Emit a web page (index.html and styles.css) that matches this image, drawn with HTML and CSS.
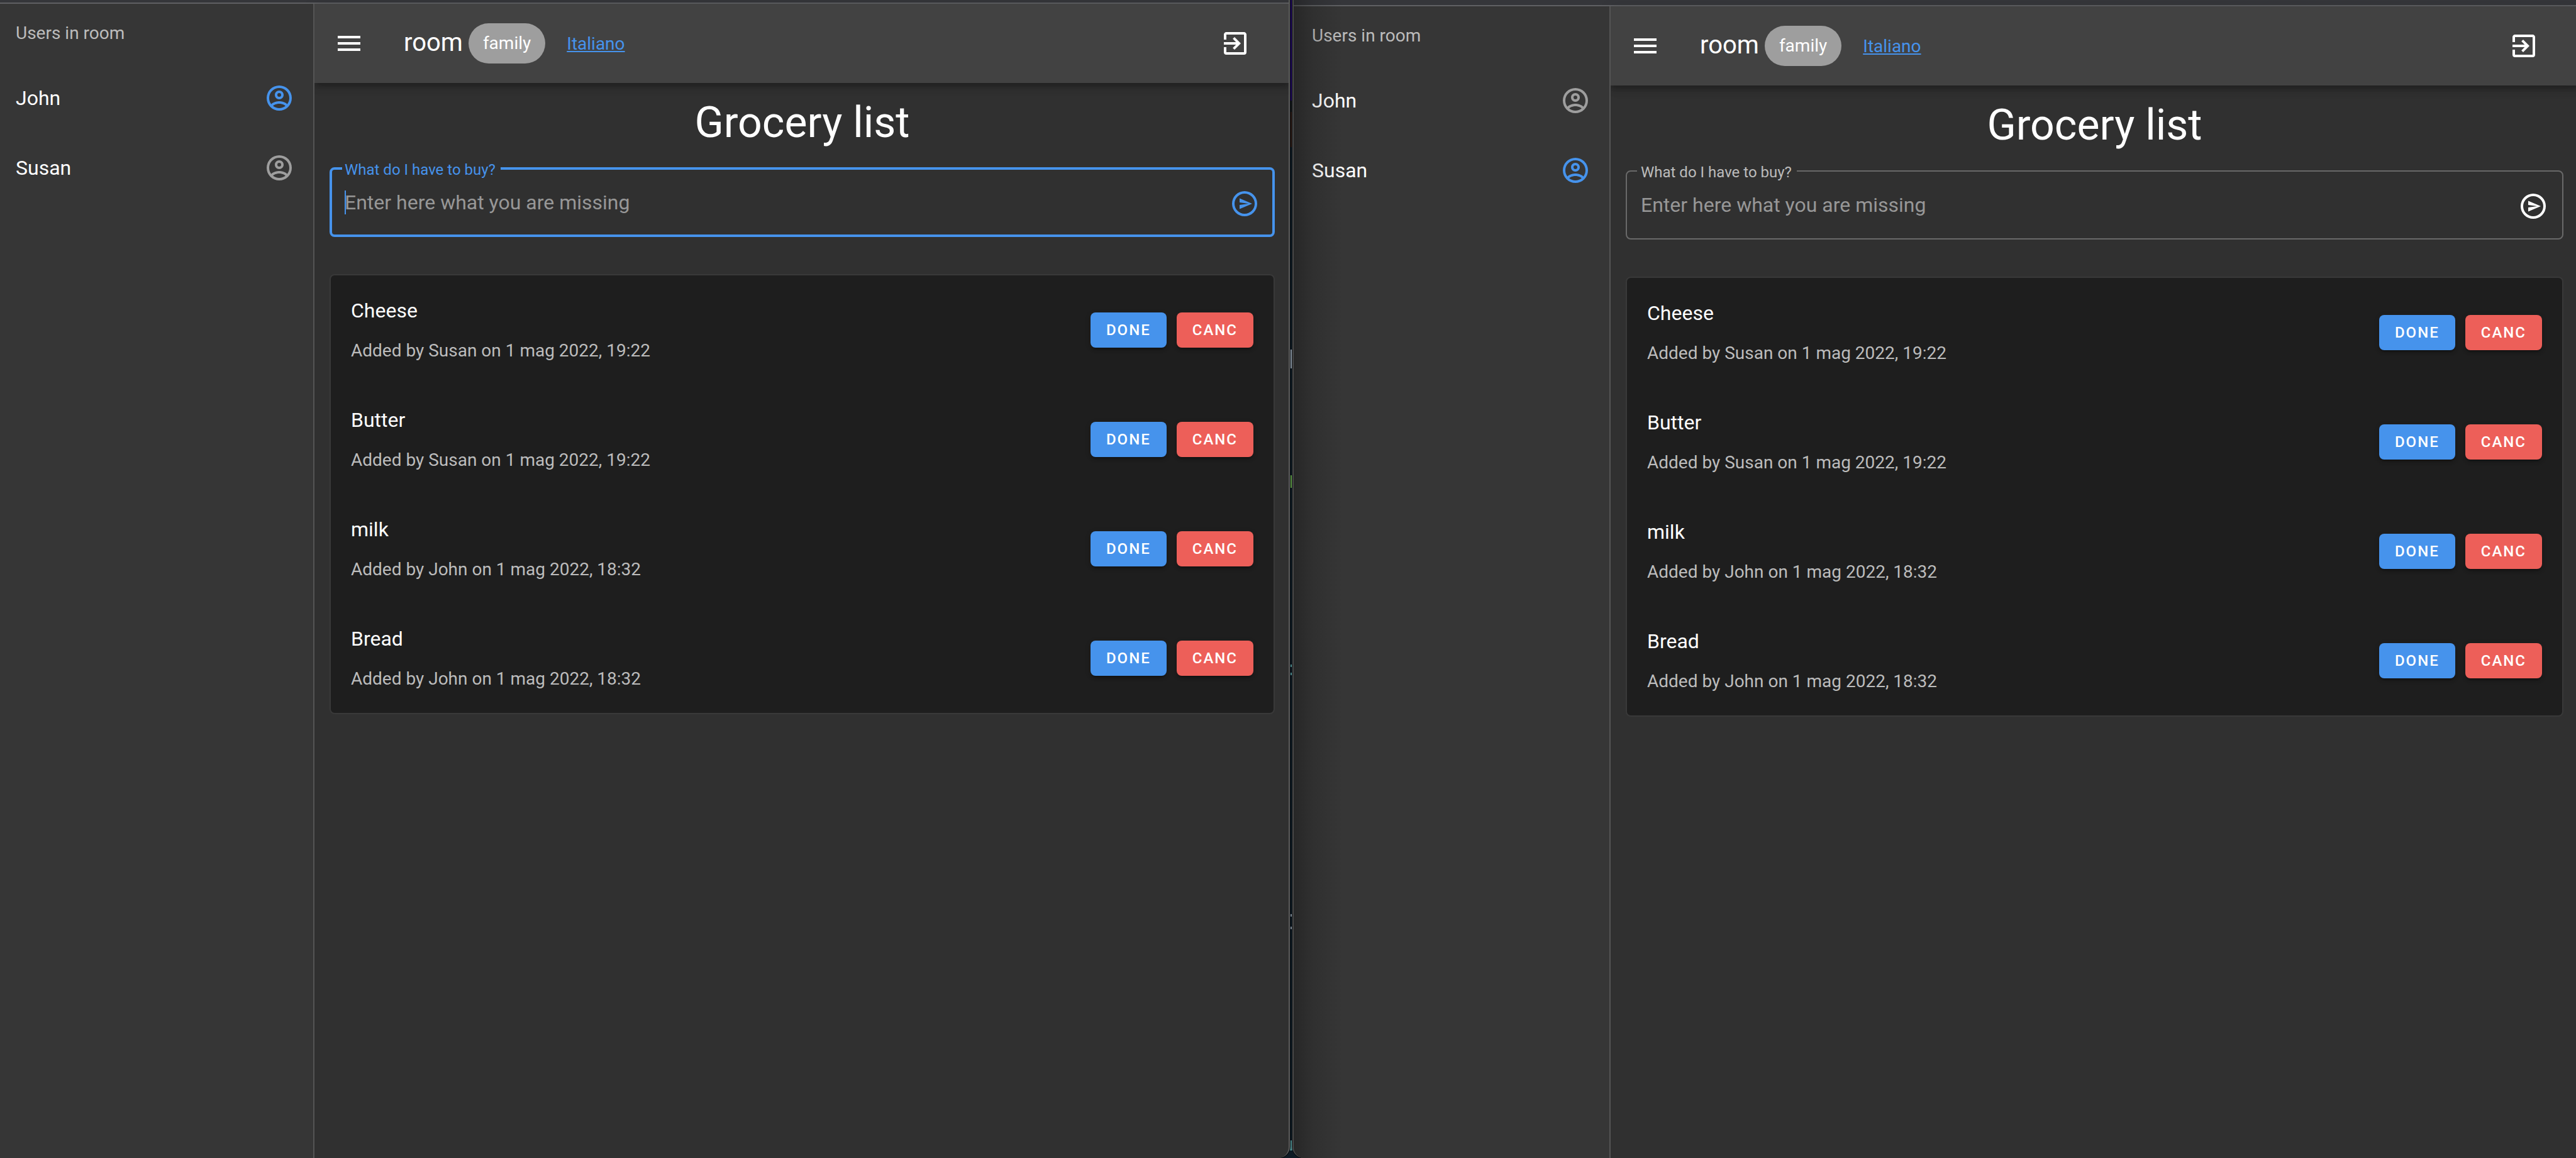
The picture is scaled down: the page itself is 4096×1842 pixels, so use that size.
FILE: index.html
```html
<!DOCTYPE html>
<html lang="en">
<head>
<meta charset="utf-8">
<title>Grocery list</title>
<link rel="stylesheet" href="styles.css">
</head>
<body>
<svg class="sprite" aria-hidden="true">
  <symbol id="account" viewBox="0 0 24 24"><path d="M12,2A10,10 0 0,0 2,12A10,10 0 0,0 12,22A10,10 0 0,0 22,12A10,10 0 0,0 12,2M7.07,18.28C7.5,17.38 10.12,16.5 12,16.5C13.88,16.5 16.5,17.38 16.93,18.28C15.57,19.36 13.86,20 12,20C10.14,20 8.43,19.36 7.07,18.28M18.36,16.83C16.93,15.09 13.46,14.5 12,14.5C10.54,14.5 7.07,15.09 5.64,16.83C4.62,15.5 4,13.82 4,12C4,7.59 7.59,4 12,4C16.41,4 20,7.59 20,12C20,13.82 19.38,15.5 18.36,16.83M12,6C10.06,6 8.5,7.56 8.5,9.5C8.5,11.44 10.06,13 12,13C13.94,13 15.5,11.44 15.5,9.5C15.5,7.56 13.94,6 12,6M12,11A1.5,1.5 0 0,1 10.5,9.5A1.5,1.5 0 0,1 12,8A1.5,1.5 0 0,1 13.5,9.5A1.5,1.5 0 0,1 12,11Z"/></symbol>
  <symbol id="menu" viewBox="0 0 24 24"><path d="M3,6H21V8H3V6M3,11H21V13H3V11M3,16H21V18H3V16Z"/></symbol>
  <symbol id="exit" viewBox="0 0 24 24"><path d="M19,3H5C3.89,3 3,3.89 3,5V9H5V5H19V19H5V15H3V19A2,2 0 0,0 5,21H19A2,2 0 0,0 21,19V5C21,3.89 20.1,3 19,3M10.08,15.58L11.5,17L16.5,12L11.5,7L10.08,8.41L12.67,11H3V13H12.67L10.08,15.58Z"/></symbol>
  <symbol id="send" viewBox="0 0 24 24"><path d="M12,2A10,10 0 0,1 22,12A10,10 0 0,1 12,22A10,10 0 0,1 2,12A10,10 0 0,1 12,2M12,4A8,8 0 0,0 4,12A8,8 0 0,0 12,20A8,8 0 0,0 20,12A8,8 0 0,0 12,4M8,7.71V11.05L15.14,12L8,12.95V16.29L18,12L8,7.71Z"/></symbol>
</svg>
<div class="desktop">
  <section class="window window-left">
    <div class="chrome"></div>
    <div class="app">
      <aside class="drawer">
        <h2 class="subheader">Users in room</h2>
        <ul class="users">
          <li class="user">John <svg class="icon icon-on"><use href="#account"/></svg></li>
          <li class="user">Susan <svg class="icon icon-off"><use href="#account"/></svg></li>
        </ul>
      </aside>
      <div class="page">
        <header class="bar">
          <button class="icon-button" aria-label="Menu"><svg class="icon"><use href="#menu"/></svg></button>
          <div class="bar-title"><span class="room">room</span><span class="chip">family</span></div>
          <a class="link" href="#it">Italiano</a>
          <button class="icon-button bar-end" aria-label="Leave room"><svg class="icon"><use href="#exit"/></svg></button>
        </header>
        <main class="content">
          <h1 class="title">Grocery list</h1>
          <fieldset class="field field-focused">
            <legend class="legend"><label for="buy-john">What do I have to buy?</label></legend>
            <div class="entry">
              <input class="input" id="buy-john" type="text" placeholder="Enter here what you are missing">
              <button class="send" aria-label="Send"><svg class="icon"><use href="#send"/></svg></button>
            </div>
          </fieldset>
          <ul class="card">
            <li class="item"><div class="item-text"><span class="item-name">Cheese</span><span class="item-info">Added by Susan on 1 mag 2022, 19:22</span></div><button class="action done">DONE</button><button class="action canc">CANC</button></li>
            <li class="item"><div class="item-text"><span class="item-name">Butter</span><span class="item-info">Added by Susan on 1 mag 2022, 19:22</span></div><button class="action done">DONE</button><button class="action canc">CANC</button></li>
            <li class="item"><div class="item-text"><span class="item-name">milk</span><span class="item-info">Added by John on 1 mag 2022, 18:32</span></div><button class="action done">DONE</button><button class="action canc">CANC</button></li>
            <li class="item"><div class="item-text"><span class="item-name">Bread</span><span class="item-info">Added by John on 1 mag 2022, 18:32</span></div><button class="action done">DONE</button><button class="action canc">CANC</button></li>
          </ul>
        </main>
      </div>
    </div>
  </section>
  <section class="window window-right">
    <div class="chrome"></div>
    <div class="app">
      <aside class="drawer">
        <h2 class="subheader">Users in room</h2>
        <ul class="users">
          <li class="user">John <svg class="icon icon-off"><use href="#account"/></svg></li>
          <li class="user">Susan <svg class="icon icon-on"><use href="#account"/></svg></li>
        </ul>
      </aside>
      <div class="page">
        <header class="bar">
          <button class="icon-button" aria-label="Menu"><svg class="icon"><use href="#menu"/></svg></button>
          <div class="bar-title"><span class="room">room</span><span class="chip">family</span></div>
          <a class="link" href="#it">Italiano</a>
          <button class="icon-button bar-end" aria-label="Leave room"><svg class="icon"><use href="#exit"/></svg></button>
        </header>
        <main class="content">
          <h1 class="title">Grocery list</h1>
          <fieldset class="field">
            <legend class="legend"><label for="buy-susan">What do I have to buy?</label></legend>
            <div class="entry">
              <input class="input" id="buy-susan" type="text" placeholder="Enter here what you are missing">
              <button class="send" aria-label="Send"><svg class="icon"><use href="#send"/></svg></button>
            </div>
          </fieldset>
          <ul class="card">
            <li class="item"><div class="item-text"><span class="item-name">Cheese</span><span class="item-info">Added by Susan on 1 mag 2022, 19:22</span></div><button class="action done">DONE</button><button class="action canc">CANC</button></li>
            <li class="item"><div class="item-text"><span class="item-name">Butter</span><span class="item-info">Added by Susan on 1 mag 2022, 19:22</span></div><button class="action done">DONE</button><button class="action canc">CANC</button></li>
            <li class="item"><div class="item-text"><span class="item-name">milk</span><span class="item-info">Added by John on 1 mag 2022, 18:32</span></div><button class="action done">DONE</button><button class="action canc">CANC</button></li>
            <li class="item"><div class="item-text"><span class="item-name">Bread</span><span class="item-info">Added by John on 1 mag 2022, 18:32</span></div><button class="action done">DONE</button><button class="action canc">CANC</button></li>
          </ul>
        </main>
      </div>
    </div>
  </section>
</div>
</body>
</html>
```

FILE: styles.css
```css
* { box-sizing: border-box; }

html { background: #0e1a24; }

body {
  margin: 0;
  overflow: hidden;
  font-family: Roboto, sans-serif;
  font-size: 32px;
  color: #fff;
}

button, input { font: inherit; color: inherit; }
button { border: 0; padding: 0; background: none; cursor: pointer; }
ul { list-style: none; margin: 0; padding: 0; }

.sprite { display: none; }

.icon {
  display: block;
  flex: none;
  width: 48px;
  height: 48px;
  fill: currentColor;
}
.icon-on { color: #4693ec; }
.icon-off { color: #9e9e9e; }

/* Two browser windows side by side, their outer edges off screen.
   The background is the sliver of other windows seen between them. */
.desktop {
  display: grid;
  grid-template-columns: 2057fr 2045fr;
  gap: 4px;
  width: calc(100% + 10px);
  min-height: 100vh;
  margin-left: -6px;
  background: linear-gradient(
    #1f0a5c 0 160px,
    #14181a 160px 178px,
    #2c1c16 178px 234px,
    #0e1a24 234px 556px,
    #8a97a3 556px 586px,
    #0e1a24 586px 756px,
    #5f9a48 756px 776px,
    #0e1a24 776px 1057px,
    #4f8e90 1057px 1061px,
    #0e1a24 1061px 1070px,
    #4f8e90 1070px 1074px,
    #0e1a24 1074px 1454px,
    #7d8a96 1454px 1458px,
    #0e1a24 1458px 1474px,
    #7d8a96 1474px 1478px,
    #0e1a24 1478px 1814px,
    #4f8e90 1814px 1830px,
    #0e1a24 1830px);
}

.window {
  position: relative;
  display: flex;
  flex-direction: column;
  min-width: 0;
  overflow: hidden;
  background: #303030;
  box-shadow: 0 0 0 1px #05080b;
}
.window::after {
  content: "";
  position: absolute;
  z-index: 2;
  inset: 0;
  pointer-events: none;
}
.window-left { border-bottom-right-radius: 18px; }
.window-left::after {
  border-right: 2px solid #5c5c5c;
  border-bottom-right-radius: 18px;
}
.window-right { border-bottom-left-radius: 18px; }
.window-right::after {
  border-left: 2px solid #4a4a4a;
  border-bottom-left-radius: 18px;
  background: linear-gradient(90deg, rgba(0, 0, 0, 0.28), rgba(0, 0, 0, 0.12) 30px, rgba(0, 0, 0, 0) 80px);
}

.chrome {
  flex: none;
  height: 6px;
  background: #35363a;
  border-bottom: 2px solid #5f6063;
}
.window-right .chrome { height: 10px; }

.app { flex: 1; display: flex; }

.drawer {
  position: relative;
  z-index: 1;
  flex: none;
  width: 506px;
  background: #363636;
  border-right: 2px solid #545454;
}
.subheader {
  margin: 0;
  padding-left: 31px;
  font-size: 28px;
  font-weight: 400;
  line-height: 94px;
  color: #bcbcbc;
}
.user {
  display: flex;
  align-items: center;
  justify-content: space-between;
  height: 111px;
  padding: 0 30px 0 31px;
}

.page { flex: 1; min-width: 0; }

.bar {
  display: flex;
  align-items: center;
  height: 126px;
  padding: 0 40px 0 8px;
  background: #424242;
  box-shadow: 0 4px 8px -2px rgba(0, 0, 0, 0.2), 0 8px 10px rgba(0, 0, 0, 0.14), 0 2px 20px rgba(0, 0, 0, 0.12);
}
.icon-button {
  display: grid;
  place-items: center;
  width: 94px;
  height: 94px;
}
.bar-title {
  display: flex;
  align-items: center;
  gap: 9px;
  margin: 0 34px 0 40px;
}
.room {
  padding-bottom: 4px;
  font-size: 40px;
}
.chip {
  padding: 0 23px;
  border-radius: 32px;
  background: #9e9e9e;
  font-size: 28px;
  line-height: 64px;
}
.link {
  font-size: 28px;
  color: #4693ec;
}
.bar-end { margin-left: auto; }

.content { padding: 24px; }

.title {
  margin: 0 0 18px;
  font-size: 68px;
  font-weight: 400;
  line-height: 78px;
  text-align: center;
}

.field {
  height: 125px;
  margin: 0 0 59px;
  padding: 0 16px;
  border: 2px solid #696969;
  border-radius: 8px;
}
.legend {
  padding: 4px 8px 0 6px;
  font-size: 24px;
  line-height: 28px;
  color: #bcbcbc;
}
.entry {
  position: relative;
  display: flex;
  align-items: center;
  gap: 16px;
  height: 80px;
  padding: 0 6px;
}
.input {
  flex: 1;
  min-width: 0;
  margin-bottom: 4px;
  padding: 0;
  border: 0;
  outline: 0;
  background: none;
}
.input::placeholder { color: #979797; opacity: 1; }

.field-focused { border: 4px solid #4693ec; }
.field-focused .legend { padding-left: 4px; color: #4693ec; }
.field-focused .entry { padding: 0 4px; }
.field-focused .send { color: #4693ec; }
.field-focused .entry::before {
  content: "";
  position: absolute;
  left: 4px;
  top: 19px;
  width: 2px;
  height: 38px;
  background: #4693ec;
}

.card {
  padding: 0;
  background: #1e1e1e;
  border: 2px solid #393939;
  border-radius: 8px;
}
.item {
  display: flex;
  align-items: center;
  gap: 16px;
  height: 174px;
  padding: 0 32px;
}
.item-text {
  flex: 1;
  display: flex;
  flex-direction: column;
  gap: 26px;
}
.item-name { line-height: 40px; }
.item-info { font-size: 28px; line-height: 36px; color: #bcbcbc; }

.action {
  height: 56px;
  padding: 0 25px;
  border-radius: 8px;
  font-size: 24px;
  font-weight: 500;
  letter-spacing: 2px;
  box-shadow: 0 6px 2px -4px rgba(0, 0, 0, 0.2), 0 4px 4px rgba(0, 0, 0, 0.14), 0 2px 10px rgba(0, 0, 0, 0.12);
}
.done { background: #4693ec; }
.canc { background: #ed5f59; }
```
